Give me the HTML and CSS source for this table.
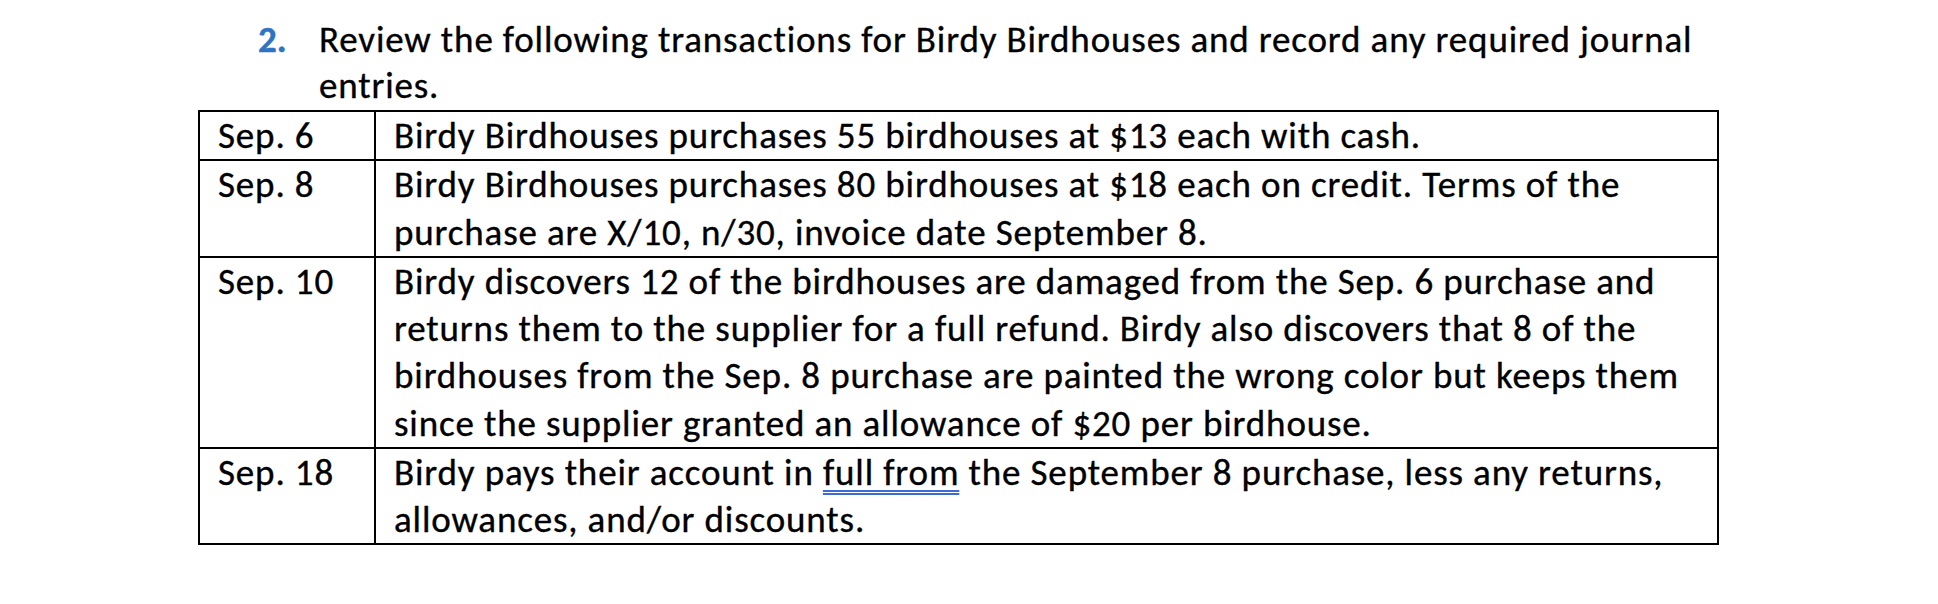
FILE: index.html
```html
<!DOCTYPE html>
<html lang="en">
<head>
<meta charset="utf-8">
<title>Birdy Birdhouses</title>
<link rel="stylesheet" href="styles.css">
</head>
<body>
<div class="page">
  <div class="question">
    <span class="qnum">2.</span>
    <span class="qtext">Review the following transactions for Birdy Birdhouses and record any required journal<br>entries.</span>
  </div>
  <table class="tx">
    <tr>
      <td class="date">Sep. 6</td>
      <td class="desc">Birdy Birdhouses purchases 55 birdhouses at $13 each with cash.</td>
    </tr>
    <tr>
      <td class="date">Sep. 8</td>
      <td class="desc">Birdy Birdhouses purchases 80 birdhouses at $18 each on credit. Terms of the<br>purchase are X/10, n/30, invoice date September 8.</td>
    </tr>
    <tr>
      <td class="date">Sep. 10</td>
      <td class="desc">Birdy discovers 12 of the birdhouses are damaged from the Sep. 6 purchase and<br>returns them to the supplier for a full refund. Birdy also discovers that 8 of the<br>birdhouses from the Sep. 8 purchase are painted the wrong color but keeps them<br>since the supplier granted an allowance of $20 per birdhouse.</td>
    </tr>
    <tr>
      <td class="date">Sep. 18</td>
      <td class="desc">Birdy pays their account in <span class="grammar">full from</span> the September 8 purchase, less any returns,<br>allowances, and/or discounts.</td>
    </tr>
  </table>
</div>
</body>
</html>
```

FILE: styles.css
```css
html, body {
  margin: 0;
  padding: 0;
  background: #ffffff;
}

body {
  font-family: Carlito, Lato, "Open Sans", sans-serif;
  color: #000000;
  -webkit-text-stroke: 0.35px #000000;
}

.page {
  padding: 17px 0 0 198px;
  width: 1522px;
}

.question {
  display: flex;
  font-size: 37px;
  line-height: 46px;
  letter-spacing: 0.85px;
  padding-left: 60px;
  height: 93px;
}

.qnum {
  flex: 0 0 61px;
  color: #2f74c2;
  -webkit-text-stroke: 0.4px #2f74c2;
  font-weight: 700;
  letter-spacing: 0;
}

.qtext {
  white-space: nowrap;
}

.tx {
  border-collapse: collapse;
  width: 1521px;
  font-size: 37px;
  line-height: 47.25px;
  letter-spacing: 0.85px;
}

.tx td {
  border: 2px solid #000000;
  padding: 0;
  vertical-align: top;
  white-space: nowrap;
}

.tx .date {
  width: 156px;
  padding-left: 18px;
}

.tx .desc {
  padding-left: 18px;
}

.grammar {
  text-decoration: underline double #3a6bd6;
  text-decoration-thickness: 1.5px;
  text-underline-offset: 5px;
}
```
